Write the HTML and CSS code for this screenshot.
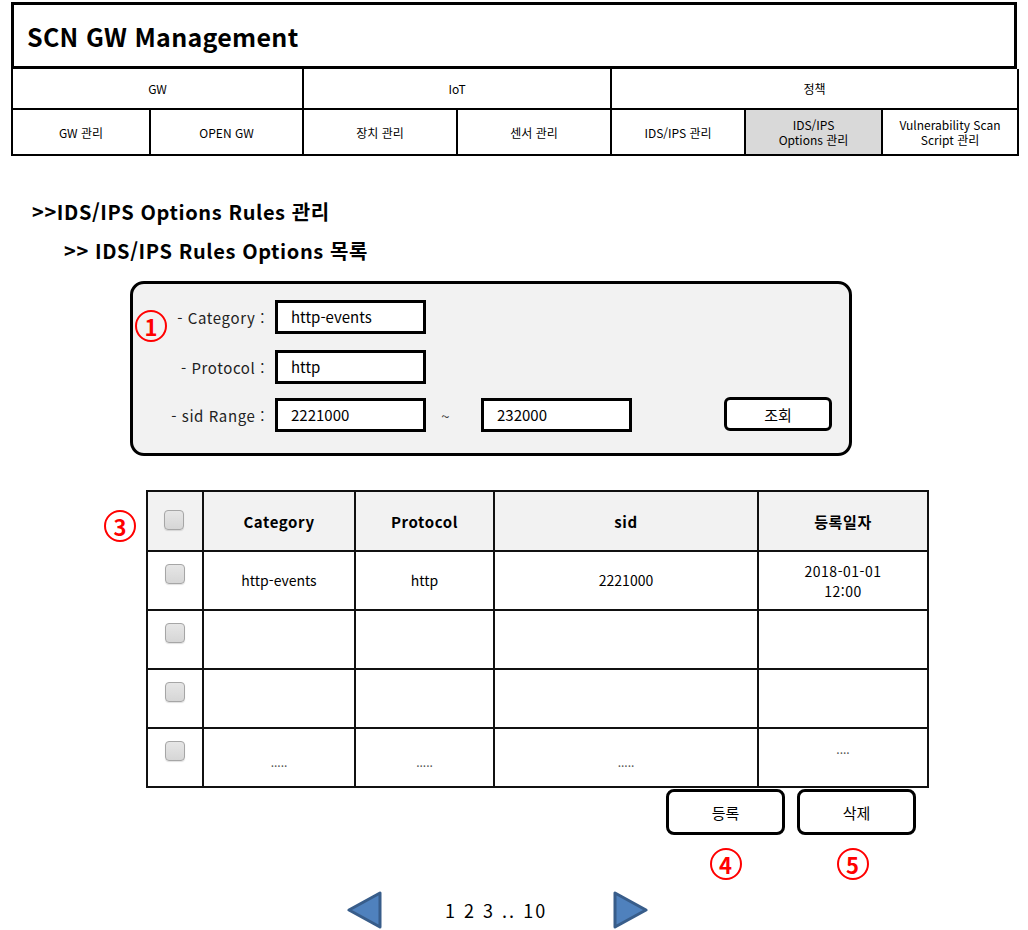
FILE: index.html
```html
<!DOCTYPE html>
<html lang="ko">
<head>
<meta charset="utf-8">
<title>SCN GW Management</title>
<link rel="stylesheet" href="styles.css">
</head>
<body>
<div class="page">
  <div class="titlebox">SCN GW Management</div>
  <table class="nav">
    <colgroup>
      <col class="n1"><col class="n2"><col class="n3"><col class="n4"><col class="n5"><col class="n6"><col class="n7">
    </colgroup>
    <tr class="nav-top">
      <td colspan="2">GW</td>
      <td colspan="2">IoT</td>
      <td colspan="3">정책</td>
    </tr>
    <tr class="nav-sub">
      <td>GW 관리</td>
      <td>OPEN GW</td>
      <td>장치 관리</td>
      <td>센서 관리</td>
      <td>IDS/IPS 관리</td>
      <td class="active">IDS/IPS<br>Options 관리</td>
      <td>Vulnerability Scan<br>Script 관리</td>
    </tr>
  </table>

  <h1 class="h1">&gt;&gt;IDS/IPS Options Rules 관리</h1>
  <h2 class="h2">&gt;&gt; IDS/IPS Rules Options 목록</h2>

  <div class="filter">
    <span class="badge badge-1">1</span>
    <div class="frow">
      <span class="flabel">- Category :</span>
      <span class="finput">http-events</span>
    </div>
    <div class="frow r2">
      <span class="flabel">- Protocol :</span>
      <span class="finput">http</span>
    </div>
    <div class="frow r3">
      <span class="flabel">- sid Range :</span>
      <span class="finput">2221000</span>
      <span class="tilde">~</span>
      <span class="finput">232000</span>
      <span class="btn search">조회</span>
    </div>
  </div>

  <div class="list">
    <span class="badge badge-3">3</span>
    <table class="grid">
      <colgroup>
        <col class="c1"><col class="c2"><col class="c3"><col class="c4"><col class="c5">
      </colgroup>
      <tr class="head">
        <th class="chk"><span class="cb"></span></th>
        <th>Category</th>
        <th>Protocol</th>
        <th>sid</th>
        <th class="ko">등록일자</th>
      </tr>
      <tr>
        <td class="chk"><span class="cb"></span></td>
        <td>http-events</td>
        <td>http</td>
        <td>2221000</td>
        <td class="date">2018-01-01<br>12:00</td>
      </tr>
      <tr>
        <td class="chk"><span class="cb"></span></td>
        <td></td><td></td><td></td><td></td>
      </tr>
      <tr>
        <td class="chk"><span class="cb"></span></td>
        <td></td><td></td><td></td><td></td>
      </tr>
      <tr class="last">
        <td class="chk"><span class="cb"></span></td>
        <td><span class="dots">.....</span></td>
        <td><span class="dots">.....</span></td>
        <td><span class="dots">.....</span></td>
        <td class="dots-top"><span class="dots">....</span></td>
      </tr>
    </table>
    <div class="actions">
      <div class="act">
        <span class="btn big">등록</span>
        <span class="badge">4</span>
      </div>
      <div class="act act2">
        <span class="btn big">삭제</span>
        <span class="badge">5</span>
      </div>
    </div>
  </div>

  <div class="pager">
    <svg class="arrow" width="35" height="38" viewBox="0 0 35 38"><polygon points="2,19 33,2 33,36" fill="#4f81bd" stroke="#385d8a" stroke-width="3" stroke-linejoin="round"/></svg>
    <span class="pages">1 2 3 .. 10</span>
    <svg class="arrow" width="35" height="38" viewBox="0 0 35 38"><polygon points="33,19 2,2 2,36" fill="#4f81bd" stroke="#385d8a" stroke-width="3" stroke-linejoin="round"/></svg>
  </div>
</div>
</body>
</html>
```
FILE: styles.css
```css
html, body {
  margin: 0;
  padding: 0;
  background: #fff;
}
body {
  font-family: "Noto Sans CJK KR", "Noto Sans", sans-serif;
  color: #000;
}
.page {
  padding-top: 2px;
  width: 1028px;
}
.titlebox {
  margin-left: 11px;
  width: 1006px;
  height: 67px;
  box-sizing: border-box;
  border: 3px solid #000;
  display: flex;
  align-items: center;
  padding-left: 13px;
  font-size: 25px;
  font-weight: 700;
  letter-spacing: 0.3px;
}
.nav {
  margin-left: 11px;
  width: 1006px;
  border-collapse: collapse;
  table-layout: fixed;
  font-size: 12px;
  line-height: 15px;
}
.nav col.n1 { width: 138px; }
.nav col.n2 { width: 153px; }
.nav col.n3 { width: 154px; }
.nav col.n4 { width: 154px; }
.nav col.n5 { width: 134px; }
.nav col.n6 { width: 137px; }
.nav col.n7 { width: 136px; }
.nav td {
  border: 2px solid #000;
  text-align: center;
  vertical-align: middle;
  padding: 0;
}
.nav tr.nav-top td { border-top: 0; height: 39px; }
.nav tr.nav-sub td { height: 44px; }
.nav td.active { background: #d9d9d9; }

.h1 {
  margin: 43px 0 0 32px;
  font-size: 20px;
  line-height: 26px;
  font-weight: 700;
  letter-spacing: 0.6px;
}
.h2 {
  margin: 13px 0 0 64px;
  font-size: 20px;
  line-height: 26px;
  font-weight: 700;
  letter-spacing: 0.6px;
}

.filter {
  position: relative;
  margin: 17px 0 0 130px;
  width: 722px;
  height: 175px;
  box-sizing: border-box;
  border: 3px solid #000;
  border-radius: 14px;
  background: #f2f2f2;
  padding-top: 16px;
}
.frow {
  display: flex;
  align-items: center;
  height: 34px;
}
.frow.r2 { margin-top: 16px; }
.frow.r3 { margin-top: 14px; }
.flabel {
  width: 132px;
  margin-right: 10px;
  text-align: right;
  font-size: 15px;
  color: #222;
  letter-spacing: 0.6px;
}
.finput {
  width: 151px;
  height: 34px;
  box-sizing: border-box;
  border: 3px solid #000;
  background: #fff;
  padding-left: 13px;
  font-size: 15px;
  line-height: 28px;
}
.tilde {
  width: 55px;
  text-align: center;
  font-size: 15px;
  color: #444;
  margin-left: -8px;
  margin-right: 8px;
}
.btn {
  display: flex;
  align-items: center;
  justify-content: center;
  box-sizing: border-box;
  border: 3px solid #000;
  background: #fff;
  font-size: 15px;
}
.btn.search {
  margin-left: auto;
  margin-right: 17px;
  width: 108px;
  height: 34px;
  border-radius: 6px;
  margin-top: -2px;
}

.badge {
  display: flex;
  align-items: center;
  justify-content: center;
  width: 32px;
  height: 32px;
  box-sizing: border-box;
  border: 2px solid #ff0000;
  border-radius: 50%;
  color: #ff0000;
  font-size: 22px;
  font-weight: 700;
  line-height: 1;
}
.badge-1 {
  position: absolute;
  left: 2px;
  top: 26px;
}
.list {
  position: relative;
  margin: 34px 0 0 146px;
  width: 781px;
}
.badge-3 {
  position: absolute;
  left: -42px;
  top: 20px;
}
.grid {
  width: 781px;
  border-collapse: collapse;
  table-layout: fixed;
  font-size: 14px;
  line-height: 19px;
}
.grid col.c1 { width: 56px; }
.grid col.c2 { width: 152px; }
.grid col.c3 { width: 139px; }
.grid col.c4 { width: 264px; }
.grid col.c5 { width: 170px; }
.grid th, .grid td {
  border: 2px solid #111;
  text-align: center;
  vertical-align: middle;
  padding: 0;
  height: 57px;
}
.grid tr.head th {
  background: #f2f2f2;
  font-size: 15px;
  font-weight: 700;
  letter-spacing: 0.6px;
  height: 58px;
}
.grid th.ko { font-weight: 400; font-size: 16px; }
.grid .chk { vertical-align: top; }
.grid tr.head .chk { vertical-align: middle; }
.cb {
  display: block;
  width: 20px;
  height: 20px;
  margin: 12px auto 0;
  box-sizing: border-box;
  border: 1.5px solid #a6a6a6;
  border-radius: 4px;
  background: linear-gradient(#e6e6e6, #d6d6d6);
  box-shadow: 0 1px 1px rgba(0,0,0,0.12);
}
.grid tr.head .cb { margin: 0 auto; transform: translate(-1px, -1px); }
.grid .date { line-height: 20px; letter-spacing: 0.5px; }
.dots {
  color: #555;
  font-size: 12px;
  display: inline-block;
  transform: translateY(4px);
}
.grid td.dots-top { vertical-align: top; }
.grid td.dots-top .dots { transform: none; margin-top: 10px; }

.actions {
  display: flex;
  justify-content: flex-end;
  gap: 12px;
  padding-right: 11px;
  margin-top: 1px;
}
.act {
  display: flex;
  flex-direction: column;
  align-items: center;
  gap: 13px;
}
.act2 .badge { transform: translateX(-4px); }
.btn.big {
  width: 119px;
  height: 46px;
  border-radius: 8px;
}

.pager {
  display: flex;
  align-items: center;
  margin: 11px 0 0 347px;
}
.arrow { display: block; }
.pages {
  width: 231px;
  box-sizing: border-box;
  padding-left: 63px;
  font-size: 18px;
  letter-spacing: 2px;
}
```
